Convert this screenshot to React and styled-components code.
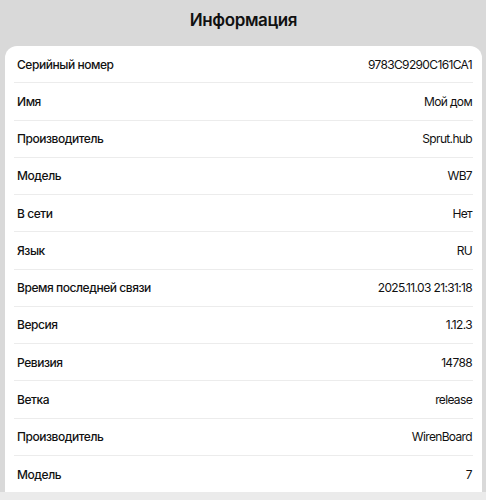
import React from "react";
import styled, { createGlobalStyle } from "styled-components";

const rows = [
  ["Серийный номер", "9783C9290C161CA1"],
  ["Имя", "Мой дом"],
  ["Производитель", "Sprut.hub"],
  ["Модель", "WB7"],
  ["В сети", "Нет"],
  ["Язык", "RU"],
  ["Время последней связи", "2025.11.03 21:31:18"],
  ["Версия", "1.12.3"],
  ["Ревизия", "14788"],
  ["Ветка", "release"],
  ["Производитель", "WirenBoard"],
  ["Модель", "7"],
];

const App = () => {
  return (
    <>
      <GlobalStyle />
      <Screen>
        <Header>Информация</Header>
        <Card>
          {rows.map(([label, value], i) => (
            <Row key={i}>
              <Label>{label}</Label>
              <Value>{value}</Value>
            </Row>
          ))}
        </Card>
      </Screen>
      <Footer />
    </>
  );
};

// Styled Components

const GlobalStyle = createGlobalStyle`
  html, body {
    margin: 0;
    padding: 0;
    background: #d9d9d9;
    font-family: Inter, "Noto Sans", sans-serif;
    color: #111;
    overflow: hidden;
  }
`;

const Screen = styled.div`
  height: 492px;
  overflow: hidden;
  padding: 0 4px 0 5px;
`;

const Header = styled.h1`
  margin: 0;
  height: 46px;
  display: flex;
  align-items: center;
  justify-content: center;
  font-size: 17px;
  font-weight: 600;
  letter-spacing: -0.4px;
  padding-bottom: 6px;
  box-sizing: border-box;
`;

const Card = styled.div`
  background: #fff;
  border-radius: 12px 12px 0 0;
  padding: 0 9px;
`;

const Row = styled.div`
  display: flex;
  align-items: center;
  justify-content: space-between;
  height: 36.27px;
  padding: 0 1px 0 3px;
  border-bottom: 1px solid #ececec;
  font-size: 12px;
`;

const Label = styled.span`
  font-weight: 500;
  letter-spacing: -0.45px;
`;

const Value = styled.span`
  font-weight: 400;
  letter-spacing: -0.65px;
`;

const Footer = styled.div`
  height: 8px;
  background: #ebebeb;
`;

export default App;
